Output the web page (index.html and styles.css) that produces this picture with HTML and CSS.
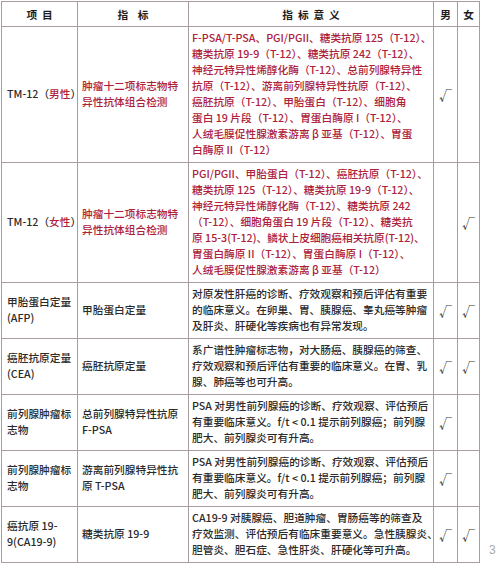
FILE: index.html
```html
<!DOCTYPE html>
<html lang="zh">
<head>
<meta charset="utf-8">
<link rel="stylesheet" href="styles.css">
</head>
<body>
<div class="page">
<table class="markers">
  <colgroup>
    <col class="c-item"><col class="c-index"><col class="c-meaning"><col class="c-male"><col class="c-female">
  </colgroup>
  <thead>
    <tr class="head">
      <th>项&nbsp;&nbsp;目</th>
      <th>指&nbsp;&nbsp;&nbsp;&nbsp;标</th>
      <th>指&nbsp;&nbsp;标&nbsp;&nbsp;意&nbsp;&nbsp;义</th>
      <th>男</th>
      <th>女</th>
    </tr>
  </thead>
  <tbody>
    <tr>
      <td class="item">TM-12（<span class="red">男性</span>）</td>
      <td class="index red">肿瘤十二项标志物特<br>异性抗体组合检测</td>
      <td class="meaning red">F-PSA/T-PSA、PGI/PGII、糖类抗原 125（T-12）、<br>糖类抗原 19-9（T-12）、糖类抗原 242（T-12）、<br>神经元特异性烯醇化酶（T-12）、总前列腺特异性<br>抗原（T-12）、游离前列腺特异性抗原（T-12）、<br>癌胚抗原（T-12）、甲胎蛋白（T-12）、细胞角<br>蛋白 19 片段（T-12）、胃蛋白酶原 I（T-12）、<br>人绒毛膜促性腺激素游离 β 亚基（T-12）、胃蛋<br>白酶原 II（T-12）</td>
      <td class="mark">√</td>
      <td class="mark"></td>
    </tr>
    <tr>
      <td class="item">TM-12（<span class="red">女性</span>）</td>
      <td class="index red">肿瘤十二项标志物特<br>异性抗体组合检测</td>
      <td class="meaning red">PGI/PGII、甲胎蛋白（T-12）、癌胚抗原（T-12）、<br>糖类抗原 125（T-12）、糖类抗原 19-9（T-12）、<br>神经元特异性烯醇化酶（T-12）、糖类抗原 242<br>（T-12）、细胞角蛋白 19 片段（T-12）、糖类抗<br>原 15-3(T-12)、鳞状上皮细胞癌相关抗原(T-12)、<br>胃蛋白酶原 II（T-12）、胃蛋白酶原 I（T-12）、<br>人绒毛膜促性腺激素游离 β 亚基（T-12）</td>
      <td class="mark"></td>
      <td class="mark">√</td>
    </tr>
    <tr>
      <td class="item">甲胎蛋白定量<br>(AFP)</td>
      <td class="index">甲胎蛋白定量</td>
      <td class="meaning">对原发性肝癌的诊断、疗效观察和预后评估有重要<br>的临床意义。在卵巢、胃、胰腺癌、睾丸癌等肿瘤<br>及肝炎、肝硬化等疾病也有异常发现。</td>
      <td class="mark">√</td>
      <td class="mark">√</td>
    </tr>
    <tr>
      <td class="item">癌胚抗原定量<br>(CEA)</td>
      <td class="index">癌胚抗原定量</td>
      <td class="meaning">系广谱性肿瘤标志物，对大肠癌、胰腺癌的筛查、<br>疗效观察和预后评估有重要的临床意义。在胃、乳<br>腺、肺癌等也可升高。</td>
      <td class="mark">√</td>
      <td class="mark">√</td>
    </tr>
    <tr>
      <td class="item">前列腺肿瘤标<br>志物</td>
      <td class="index">总前列腺特异性抗原<br>F-PSA</td>
      <td class="meaning">PSA 对男性前列腺癌的诊断、疗效观察、评估预后<br>有重要临床意义。f/t &lt; 0.1 提示前列腺癌；前列腺<br>肥大、前列腺炎可有升高。</td>
      <td class="mark">√</td>
      <td class="mark"></td>
    </tr>
    <tr>
      <td class="item">前列腺肿瘤标<br>志物</td>
      <td class="index">游离前列腺特异性抗<br>原 T-PSA</td>
      <td class="meaning">PSA 对男性前列腺癌的诊断、疗效观察、评估预后<br>有重要临床意义。f/t &lt; 0.1 提示前列腺癌；前列腺<br>肥大、前列腺炎可有升高。</td>
      <td class="mark">√</td>
      <td class="mark"></td>
    </tr>
    <tr>
      <td class="item">癌抗原 19-<br>9(CA19-9)</td>
      <td class="index">糖类抗原 19-9</td>
      <td class="meaning">CA19-9 对胰腺癌、胆道肿瘤、胃肠癌等的筛查及<br>疗效监测、评估预后有临床重要意义。急性胰腺炎、<br>胆管炎、胆石症、急性肝炎、肝硬化等可升高。</td>
      <td class="mark">√</td>
      <td class="mark">√</td>
    </tr>
  </tbody>
</table>
<span class="page-num">3</span>
</div>
</body>
</html>
```

FILE: styles.css
```css
html, body {
  margin: 0;
  padding: 0;
  background: #ffffff;
}

.page {
  position: relative;
  width: 500px;
  height: 565px;
  padding: 1px 0 0 1px;
  box-sizing: border-box;
  font-family: "Noto Sans CJK SC", "Noto Sans", sans-serif;
  color: #2a2a2a;
}

.markers {
  border-collapse: collapse;
  table-layout: fixed;
  width: 478px;
  font-size: 10.7px;
  line-height: 16px;
  font-weight: 500;
}

.c-item { width: 76px; }
.c-index { width: 111px; }
.c-meaning { width: 245px; }
.c-male { width: 24px; }
.c-female { width: 22px; }

.markers th,
.markers td {
  border: 1px solid #a89c9c;
  padding: 3px 4px 4px;
  vertical-align: middle;
  white-space: nowrap;
  overflow: visible;
}

.head th {
  height: 17px;
  font-weight: 700;
  color: #1e1e1e;
  text-align: center;
  padding: 4px 2px 3px;
}

.item {
  padding-left: 5px !important;
  padding-right: 0 !important;
}

.index {
  padding-left: 4px;
}

.meaning {
  padding-left: 3px !important;
  padding-right: 0 !important;
}

.mark {
  text-align: center;
  font-size: 13px;
  font-weight: 400;
  padding: 0 !important;
  color: #333;
}

.red {
  color: #ad213a;
}

.page-num {
  position: absolute;
  left: 489px;
  top: 543px;
  font-size: 12px;
  color: #aaaaaa;
  font-family: "Liberation Sans", sans-serif;
}
```
